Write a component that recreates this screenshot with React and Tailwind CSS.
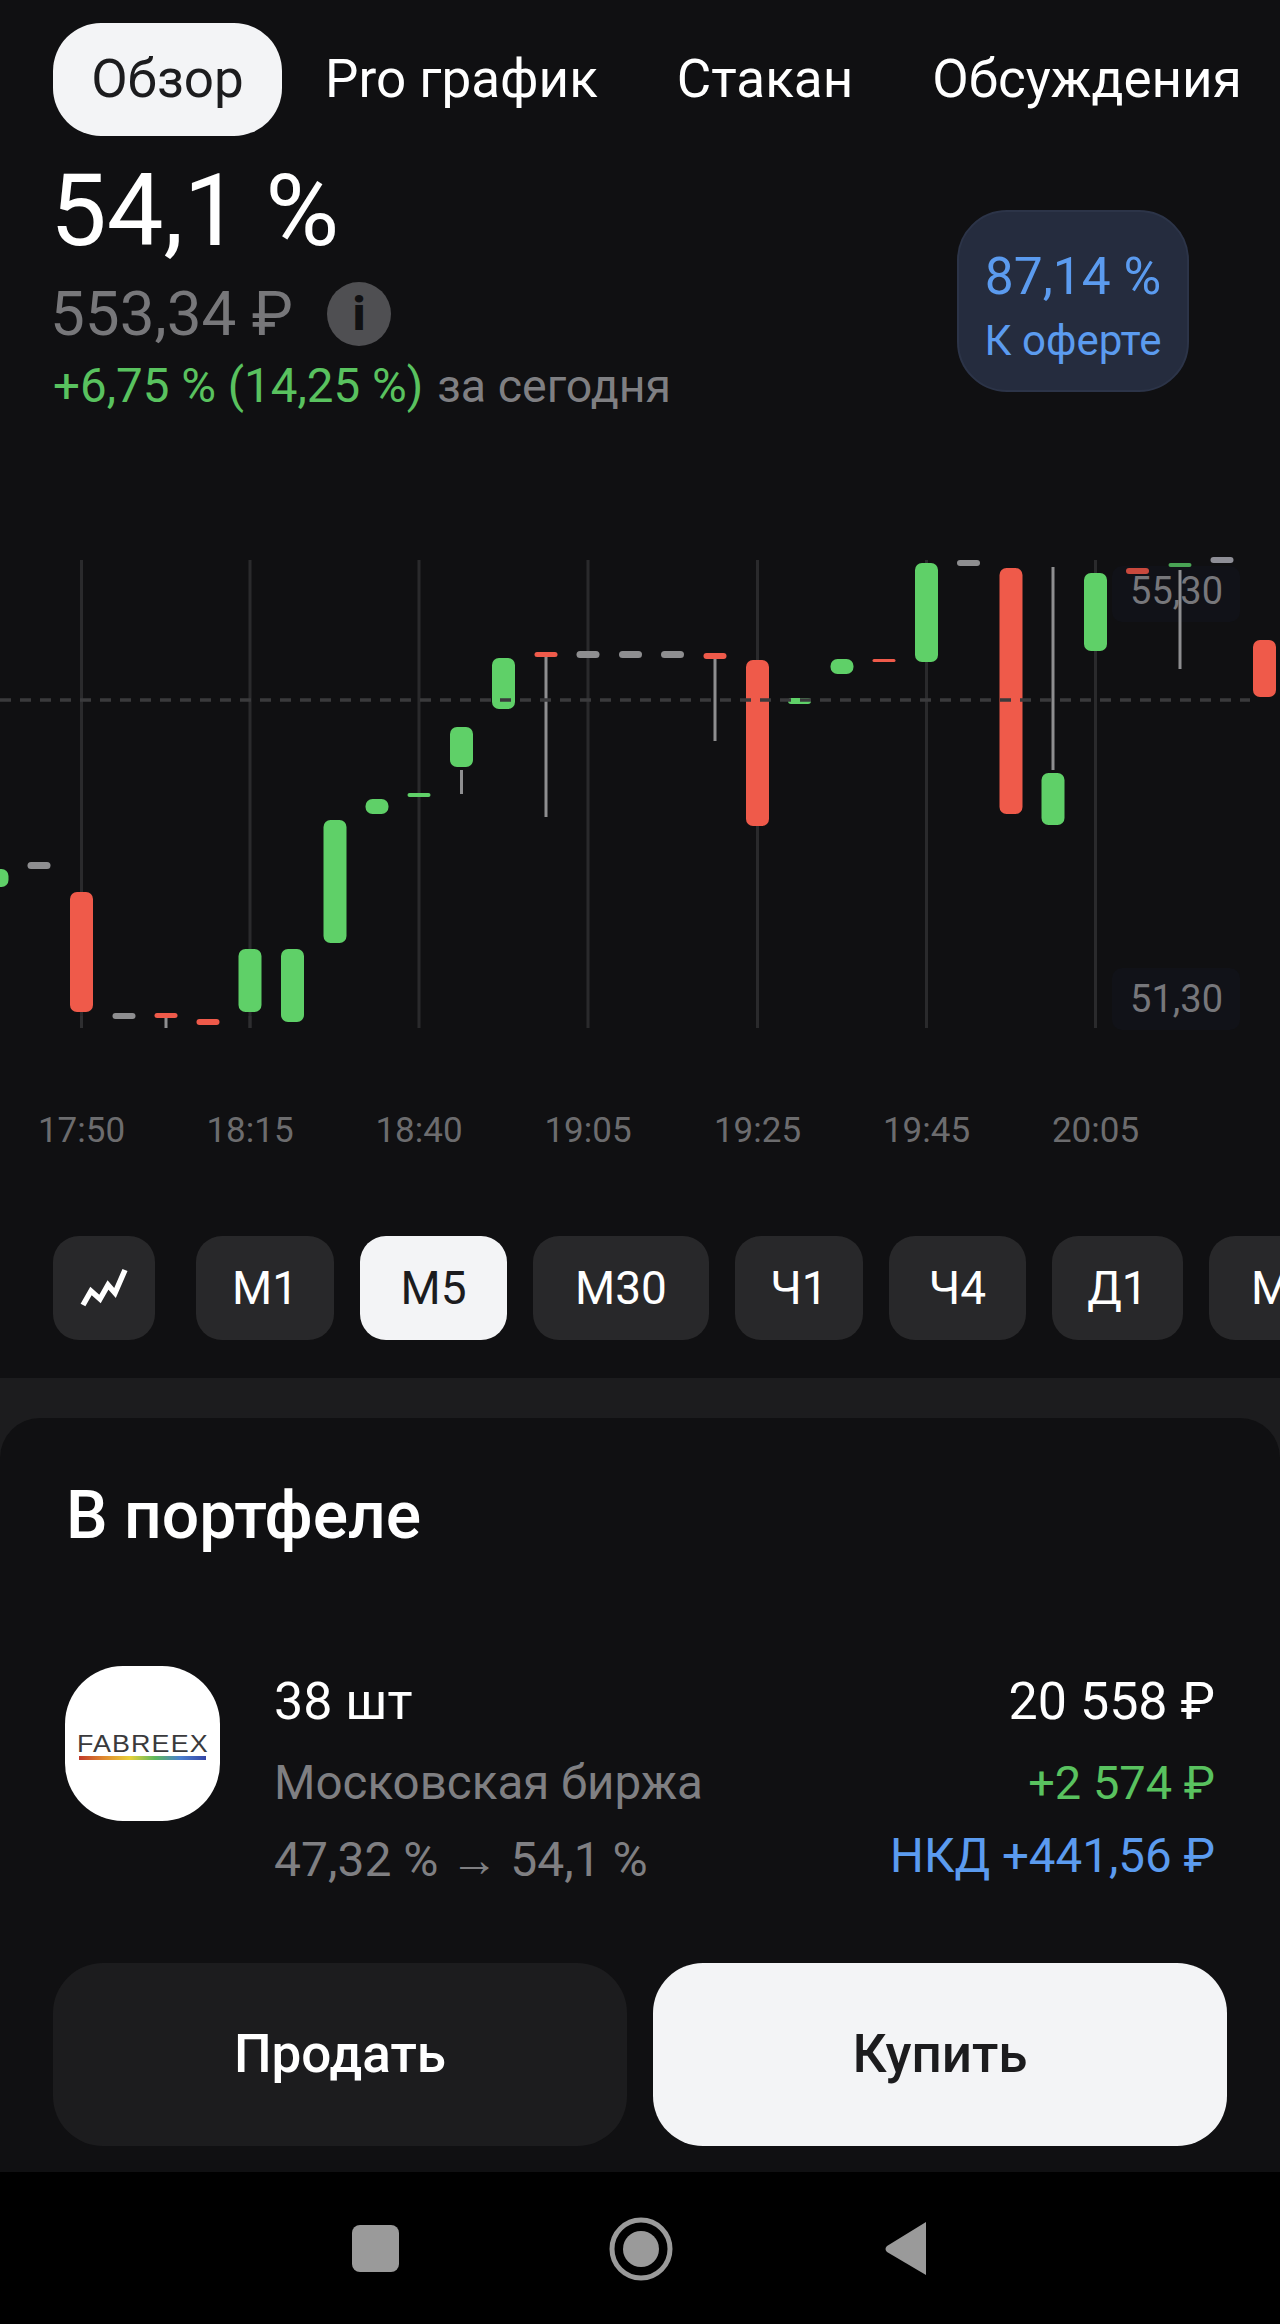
import React from "react";

const CHART_TOP = 540;
const GREEN = "#5fd068";
const RED = "#ef5a4a";
const GRAY = "#8e8e90";

// x, top, bottom of each candle body, optional wick [from, to]
const candles = [
  { x: -3, t: 869, b: 887, c: GREEN },
  { x: 39, t: 862, b: 869, c: GRAY },
  { x: 81.5, t: 892, b: 1012, c: RED, w: [1016, 1028], wc: "#2e2e30" },
  { x: 124, t: 1013, b: 1019, c: GRAY },
  { x: 166, t: 1013, b: 1018, c: RED, w: [1018, 1028] },
  { x: 208, t: 1019, b: 1025, c: RED },
  { x: 250, t: 949, b: 1012, c: GREEN, w: [1016, 1028], wc: "#2e2e30" },
  { x: 292.5, t: 949, b: 1022, c: GREEN },
  { x: 335, t: 820, b: 943, c: GREEN },
  { x: 377, t: 799, b: 814, c: GREEN },
  { x: 419, t: 793, b: 797, c: GREEN },
  { x: 461.5, t: 727, b: 767, c: GREEN, w: [770, 794] },
  { x: 503.5, t: 658, b: 709, c: GREEN },
  { x: 546, t: 652, b: 657, c: RED, w: [657, 817] },
  { x: 588, t: 651, b: 658, c: GRAY },
  { x: 630.5, t: 651, b: 658, c: GRAY },
  { x: 672.5, t: 651, b: 658, c: GRAY },
  { x: 715, t: 653, b: 659, c: RED, w: [659, 741] },
  { x: 757.5, t: 660, b: 826, c: RED },
  { x: 799.5, t: 698, b: 704, c: GREEN },
  { x: 842, t: 659, b: 674, c: GREEN },
  { x: 884, t: 659, b: 662, c: RED },
  { x: 926.5, t: 563, b: 662, c: GREEN },
  { x: 968.5, t: 560, b: 566, c: GRAY },
  { x: 1011, t: 568, b: 814, c: RED },
  { x: 1053, t: 773, b: 825, c: GREEN, w: [567, 770] },
  { x: 1095.5, t: 573, b: 651, c: GREEN },
  { x: 1137.5, t: 568, b: 574, c: "#c9493d" },
  { x: 1180, t: 563, b: 567, c: "#49a354", w: [570, 669] },
  { x: 1222, t: 557, b: 563, c: "#8e8e96" },
  { x: 1264.5, t: 640, b: 697, c: RED },
];

const gridLines = [
  { x: 81.5, label: "17:50" },
  { x: 250, label: "18:15" },
  { x: 419, label: "18:40" },
  { x: 588, label: "19:05" },
  { x: 757.5, label: "19:25" },
  { x: 926.5, label: "19:45" },
  { x: 1095.5, label: "20:05" },
];

const periods = [
  { label: "М1", w: "w-[138px]" },
  { label: "М5", w: "w-[147px]", active: true },
  { label: "М30", w: "w-[176px]" },
  { label: "Ч1", w: "w-[128px]" },
  { label: "Ч4", w: "w-[137px]" },
  { label: "Д1", w: "w-[131px]" },
  { label: "МН", w: "w-[157px]" },
];

const CandleChart = () => (
  <div className="relative h-[640px] w-full">
    <svg width="1280" height="500" viewBox={`0 ${CHART_TOP} 1280 500`} className="absolute left-0 top-0">
      {gridLines.map((g) => (
        <rect key={g.x} x={g.x - 1.5} y={560} width={3} height={468} fill="#2a2a2c" />
      ))}
      {/* tinted plates under the price scale */}
      <rect x="1112" y="566" width="128" height="56" rx="10" fill="#111218" />
      <rect x="1112" y="968" width="128" height="62" rx="10" fill="#111218" />
      {candles.map((c, i) => (
        <g key={i}>
          {c.w && <rect x={c.x - 1.5} y={c.w[0]} width={3} height={c.w[1] - c.w[0]} fill={c.wc || GRAY} />}
          <rect
            x={c.x - 11.5}
            y={c.t}
            width={23}
            height={c.b - c.t}
            rx={Math.min(7, (c.b - c.t) / 2)}
            fill={c.c}
          />
        </g>
      ))}
      <line x1="0" x2="1250" y1="700" y2="700" stroke="#3a3a3c" strokeWidth="3.5" strokeDasharray="11 9" />
    </svg>

    <span className="absolute left-[1120px] top-[29px] w-[103px] text-right text-[38px] leading-[44px] text-[#77777b]">55,30</span>
    <span className="absolute left-[1120px] top-[437px] w-[103px] text-right text-[38px] leading-[44px] text-[#77777b]">51,30</span>

    {gridLines.map((g) => (
      <span
        key={g.label}
        className="absolute top-[568px] -translate-x-1/2 text-[35px] leading-[46px] text-[#6c6c6e]"
        style={{ left: g.x }}
      >
        {g.label}
      </span>
    ))}
  </div>
);

const App = () => {
  return (
    <div className="flex h-[2324px] w-[1280px] flex-col overflow-hidden bg-[#101012] font-['Roboto',sans-serif] text-white">
      <nav className="flex items-center whitespace-nowrap pl-[53px] pt-[23px] text-[53px]">
        <div className="flex h-[113px] w-[229px] shrink-0 items-center justify-center rounded-[48px] bg-[#f3f4f6] text-[#1c1c1e]">Обзор</div>
        <div className="ml-[43px] flex gap-[79px]">
          <span>Pro график</span>
          <span>Стакан</span>
          <span>Обсуждения</span>
        </div>
      </nav>

      <section className="flex h-[268px] shrink-0 items-start justify-between pl-[53px] pr-[91px] pt-[20px]">
        <div className="flex flex-col">
          <div className="-ml-[3px] h-[110px] text-[101px] leading-[110px]">54,1 %</div>
          <div className="-ml-[3px] mt-[12px] flex h-[72px] items-center gap-[34px] text-[62px] leading-[72px] text-[#77777a]">
            <span>553,34 ₽</span>
            <span className="flex h-[64px] w-[64px] items-center justify-center rounded-full bg-[#4f4f52] text-[46px] font-black leading-none text-[#111113]">i</span>
          </div>
          <div className="mt-[10px] whitespace-nowrap leading-[52px]">
            <span className="text-[47.5px] text-[#59c25f]">+6,75 % (14,25 %)</span>
            <span className="ml-[14px] text-[46.5px] text-[#7f7f82]">за сегодня</span>
          </div>
        </div>
        <div className="mt-[54px] flex h-[182px] w-[232px] flex-col items-center justify-center rounded-[50px] border-2 border-[#2c3448] bg-[#252c3e] pt-[11px] text-[#5b9bef]">
          <span className="text-[51.5px] leading-[62px]">87,14 %</span>
          <span className="mt-[7px] text-[42px] leading-[52px]">К оферте</span>
        </div>
      </section>

      <div className="mt-[136px]">
        <CandleChart />
      </div>

      <div className="mt-[56px] flex h-[104px] shrink-0 items-stretch pl-[53px]">
        <button className="mr-[41px] flex w-[102px] shrink-0 items-center justify-center rounded-[26px] bg-[#28282a]">
          <svg width="102" height="104" viewBox="3 0 102 104" fill="none">
            <path d="M33 69 L41 55 L50 63 L58 49 L65 57 L75 34" stroke="#fff" strokeWidth="5.5" />
          </svg>
        </button>
        <div className="flex gap-[26px]">
          {periods.map((p) => (
            <button
              key={p.label}
              className={
                p.active
                  ? `${p.w} shrink-0 rounded-[26px] bg-[#f3f4f6] text-[46px] text-[#1c1c1e]`
                  : `${p.w} shrink-0 rounded-[26px] bg-[#28282a] text-[46px] text-white`
              }
            >
              {p.label}
            </button>
          ))}
        </div>
      </div>

      <div className="mt-[38px] flex flex-1 flex-col bg-[#1c1c1e] pt-[40px]">
        <div className="flex flex-1 flex-col rounded-t-[40px] bg-[#101012]">
          <h2 className="ml-[66px] mt-[66px] text-[66px] font-medium leading-[64px]">В портфеле</h2>

          <div className="mt-[118px] flex items-start pl-[65px] pr-[65px]">
            <div className="flex h-[155px] w-[155px] shrink-0 flex-col items-center justify-center rounded-[58px] bg-white pt-[5px]">
              <span className="font-['Liberation_Sans',sans-serif] text-[24px] leading-[24px] tracking-[1px] text-[#3a3a3c] [transform:scaleX(1.12)]">FABREEX</span>
              <div className="h-[4px] w-[127px] bg-[linear-gradient(90deg,#c0392b,#e08a2e,#e8d13a,#5cb85c,#4a7fd0,#3545a5)]"></div>
            </div>
            <div className="ml-[54px] flex flex-col pt-[7px]">
              <span className="text-[52px] leading-[58px]">38 шт</span>
              <span className="mt-[23px] text-[47.5px] leading-[58px] text-[#7f7f82]">Московская биржа</span>
              <span className="mt-[19px] text-[48px] leading-[58px] text-[#7f7f82]">
                47,32 % <span className="font-bold">→</span> 54,1 %
              </span>
            </div>
            <div className="ml-auto flex flex-col items-end pt-[7px]">
              <span className="text-[52px] leading-[58px]">20 558 ₽</span>
              <span className="mt-[23px] text-[47px] leading-[58px] text-[#59c25f]">+2 574 ₽</span>
              <span className="mt-[15px] text-[47.5px] leading-[58px] text-[#5b9bef]">НКД +441,56 ₽</span>
            </div>
          </div>

          <div className="mt-auto flex gap-[26px] px-[53px] pb-[26px]">
            <button className="h-[183px] flex-1 rounded-[50px] bg-[#1c1c1e] text-[53px] font-medium text-white">Продать</button>
            <button className="h-[183px] flex-1 rounded-[50px] bg-[#f3f4f6] text-[53px] font-medium text-[#1c1c1e]">Купить</button>
          </div>
        </div>
      </div>

      <footer className="flex h-[152px] shrink-0 items-center justify-center bg-black">
        <svg width="600" height="152" viewBox="0 0 600 152" className="ml-[2px]">
          <rect x="11" y="53" width="47" height="47" rx="8" fill="#9a9a9a" />
          <circle cx="300" cy="77" r="29" fill="none" stroke="#9a9a9a" strokeWidth="5" />
          <circle cx="300" cy="77" r="18" fill="#9a9a9a" />
          <path d="M585 50 L585 103 L546 80 Q543 77 546 74 Z" fill="#9a9a9a" />
        </svg>
      </footer>
    </div>
  );
};

export default App;
